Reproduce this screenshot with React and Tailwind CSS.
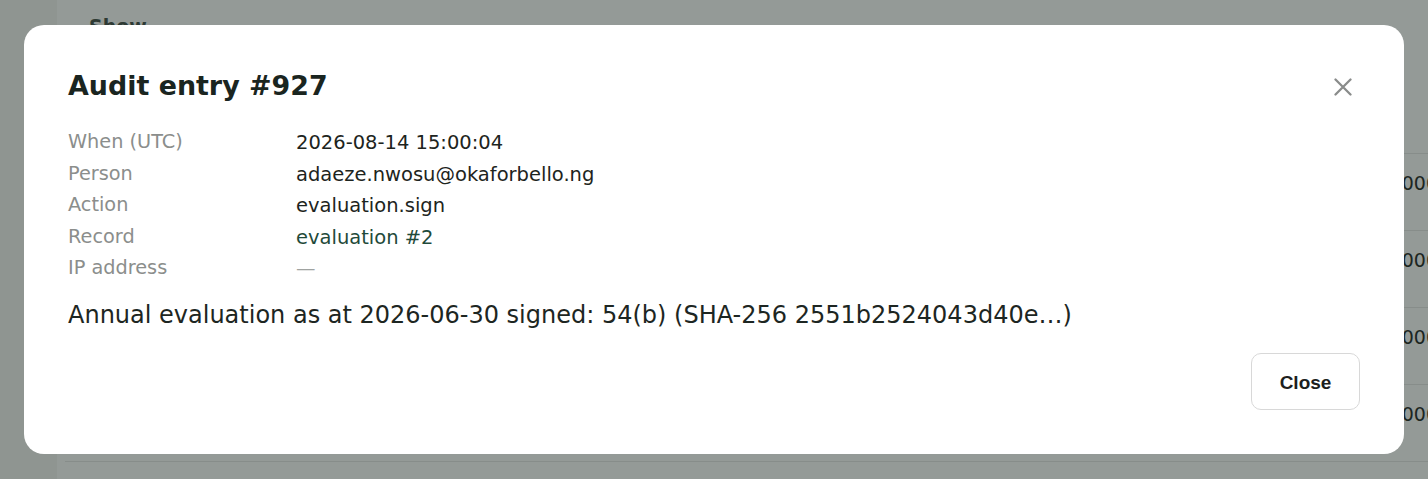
import React from "react";

const rows = [
  { label: "When (UTC)", value: "2026-08-14 15:00:04" },
  { label: "Person", value: "adaeze.nwosu@okaforbello.ng" },
  { label: "Action", value: "evaluation.sign" },
  { label: "Record", value: "evaluation #2", link: true },
  { label: "IP address", value: "—", muted: true },
];

export default function App() {
  const font = { fontFamily: '"DejaVu Sans", Verdana, sans-serif' };
  return (
    <div className="relative w-[1428px] h-[479px] overflow-hidden bg-[#949a97]" style={font}>
      {/* background page (dimmed) */}
      <div className="absolute inset-0 flex">
        <div className="w-[57px] h-full bg-[#8f9591]"></div>
        <div className="flex-1 relative">
          <div className="absolute left-[32px] top-[12px] text-[19px] font-bold text-[#2e3a34]">Show</div>
          <div className="absolute left-[8px] right-0 top-[153px] flex flex-col">
            {[0, 1, 2, 3, 4].map((i) => (
              <div key={i} className="h-[77px] border-t border-[#878d8a] flex justify-end pt-[16px]">
                {i < 4 && (
                  <span className="text-[19px] leading-[26px] text-[#1c2622] mr-[-10px]">000</span>
                )}
              </div>
            ))}
          </div>
        </div>
      </div>

      {/* modal */}
      <div className="absolute left-[24px] top-[25px] w-[1380px] h-[429px] bg-white rounded-[20px] px-[44px] pt-[44px] pb-[44px] flex flex-col">
        <div className="flex items-center justify-between h-[34px]">
          <h2 className="text-[26.9px] font-bold text-[#1a2520] leading-[34px]">Audit entry #927</h2>
          <button className="w-[24px] h-[24px] flex items-center justify-center mr-[5px] mt-[2px]">
            <svg width="18" height="18" viewBox="0 0 18 18">
              <path d="M1.5 1.5 L16.5 16.5 M16.5 1.5 L1.5 16.5" stroke="#8a8c8b" strokeWidth="2.3" strokeLinecap="round" />
            </svg>
          </button>
        </div>
        <div className="mt-[24px] flex flex-col">
          {rows.map((r) => (
            <div key={r.label} className="flex h-[31.5px] items-center">
              <div className="w-[228px] text-[19.3px] text-[#8b8e8c]">{r.label}</div>
              <div className={"text-[19.5px] " + (r.link ? "text-[#1f4a3a]" : r.muted ? "text-[#a0a3a1]" : "text-[#1d2420]")}>{r.value}</div>
            </div>
          ))}
        </div>
        <p className="mt-[14px] text-[24px] leading-[32px] text-[#1d2622]">
          Annual evaluation as at 2026-06-30 signed: 54(b) (SHA-256 2551b2524043d40e…)
        </p>
        <div className="mt-auto flex justify-end">
          <button
            className="w-[109px] h-[57px] rounded-[10px] border border-[#d8d8d8] bg-white text-[19px] font-bold text-[#1d1f1e] pt-[3px]"
            style={{ fontFamily: '"Liberation Sans", Arial, sans-serif' }}
          >
            Close
          </button>
        </div>
      </div>
    </div>
  );
}
